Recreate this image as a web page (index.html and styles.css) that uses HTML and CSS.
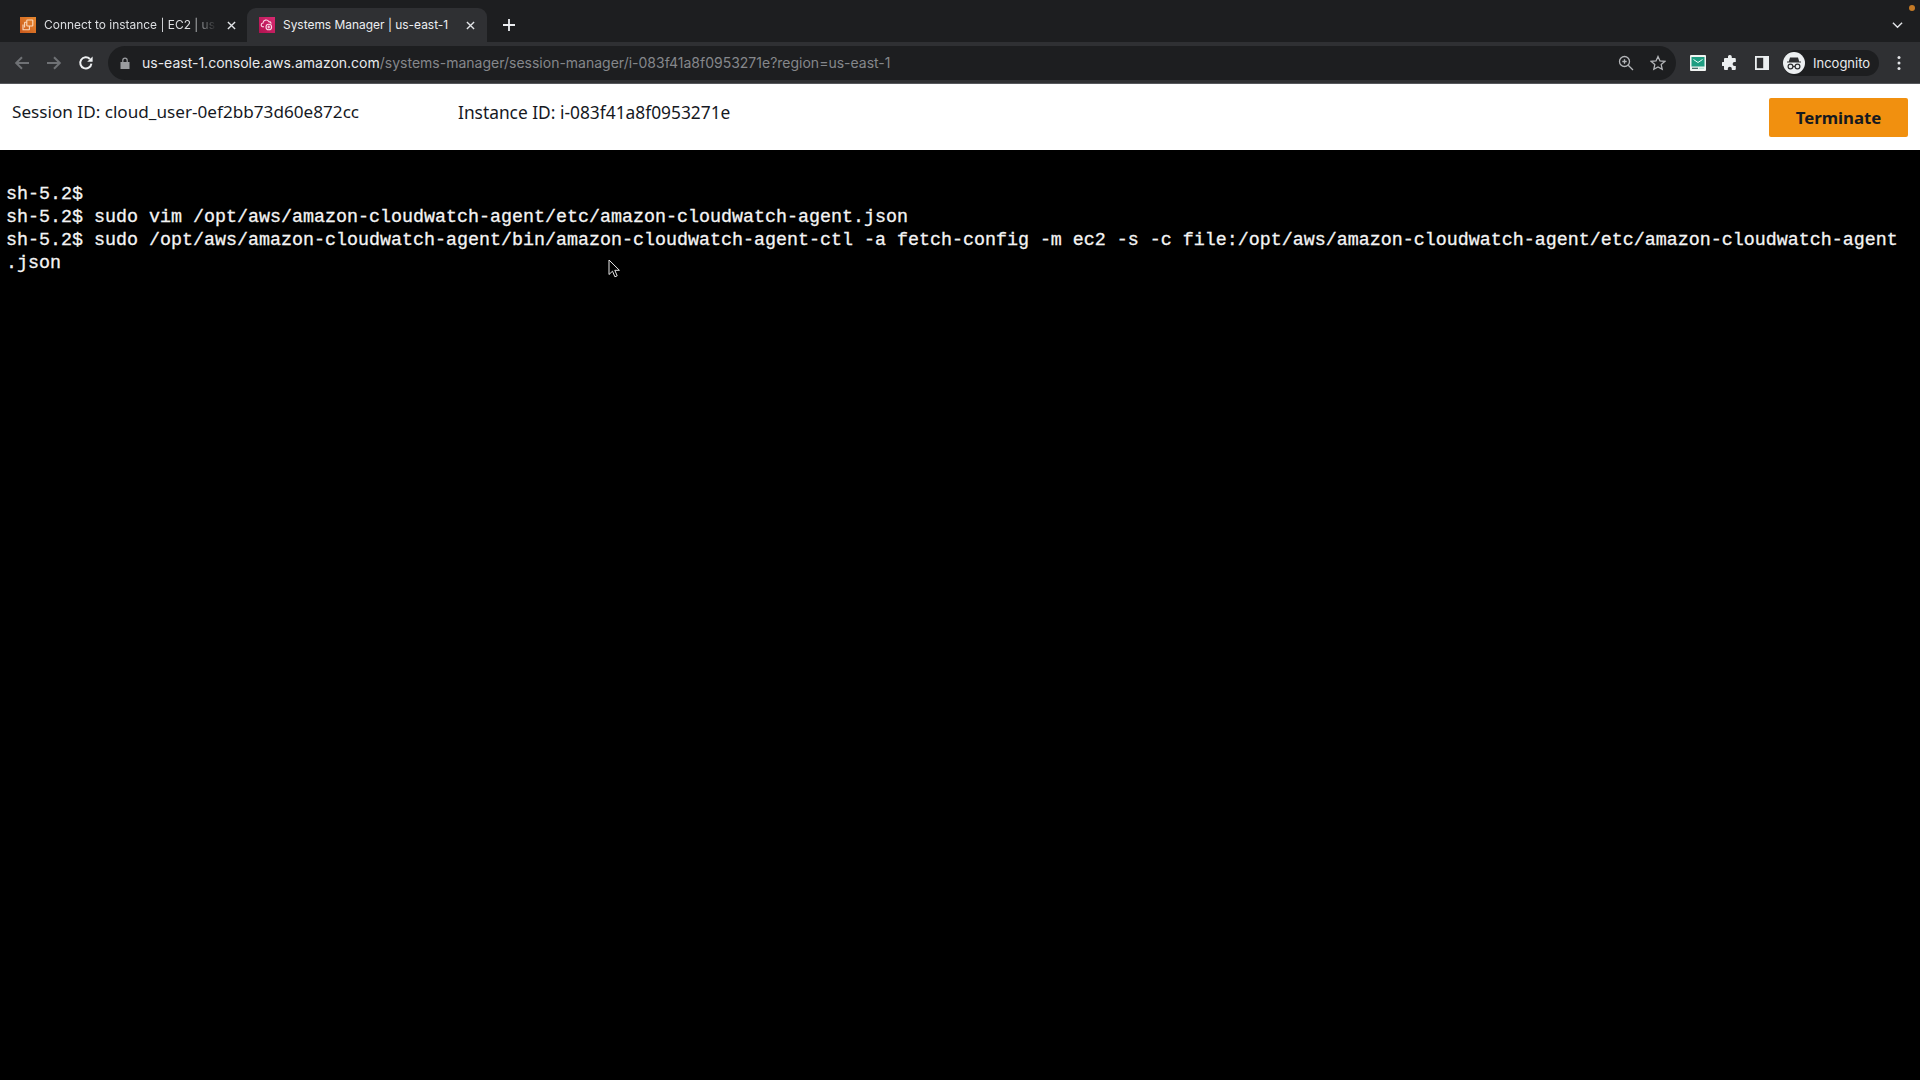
FILE: index.html
```html
<!DOCTYPE html>
<html lang="en">
<head>
<meta charset="utf-8">
<title>Systems Manager | us-east-1</title>
<link rel="stylesheet" href="styles.css">
</head>
<body>
<div class="tabstrip">
  <div class="tab">
    <svg class="favicon" viewBox="0 0 16 16"><defs><linearGradient id="ec2" x1="0" y1="1" x2="1" y2="0"><stop offset="0" stop-color="#c9581c"/><stop offset="1" stop-color="#e8892f"/></linearGradient></defs><rect width="16" height="16" fill="url(#ec2)"/><g fill="none" stroke="#fbd9bd" stroke-width="1.1"><rect x="6.8" y="3" width="6" height="6" rx=".6"/><path d="M6.8 5.2H5.2a.6.6 0 0 0-.6.6v4.6M3 7.6v5.2h5.8a.6.6 0 0 0 .6-.6V9"/></g></svg>
    <span class="tab-title fade">Connect to instance | EC2 | us</span>
    <svg class="tab-close" viewBox="0 0 10 10"><path d="M1 1l8 8M9 1l-8 8"/></svg>
  </div>
  <div class="tab active">
    <svg class="favicon" viewBox="0 0 16 16"><defs><linearGradient id="ssm" x1="0" y1="1" x2="1" y2="0"><stop offset="0" stop-color="#b0124f"/><stop offset="1" stop-color="#d92a72"/></linearGradient></defs><rect width="16" height="16" fill="url(#ssm)"/><g fill="none" stroke="#fcd9e7" stroke-width="1.1"><path d="M5 9.8H4.2a1.9 1.9 0 0 1-.2-3.8A3.1 3.1 0 0 1 9.8 4.6a2.4 2.4 0 0 1 2.4 2"/><circle cx="9.8" cy="10" r="2.8"/><path d="M9.8 8.6v2.8M8.4 10h2.8"/></g></svg>
    <span class="tab-title">Systems Manager | us-east-1</span>
    <svg class="tab-close" viewBox="0 0 10 10"><path d="M1 1l8 8M9 1l-8 8"/></svg>
  </div>
  <svg class="new-tab" viewBox="0 0 12 12"><path d="M6 0v12M0 6h12"/></svg>
  <svg class="tab-menu" viewBox="0 0 12 8"><path d="M1 1.5l5 5 5-5"/></svg>
  <span class="notice-dot"></span>
</div>

<div class="toolbar">
  <svg class="nav dim" viewBox="0 0 16 16"><path d="M15 8H2.5M8 2.2L2.2 8 8 13.8"/></svg>
  <svg class="nav dim" viewBox="0 0 16 16"><path d="M1 8h12.5M8 2.2L13.8 8 8 13.8"/></svg>
  <svg class="nav" viewBox="0 0 16 16"><path d="M13.4 8.6a5.6 5.6 0 1 1-1.5-4.6"/><path class="solid" d="M14.6 1.4v5.4H9.2z"/></svg>
  <div class="omnibox">
    <svg class="lock" viewBox="0 0 10 12"><path d="M2.2 5V3.4a2.8 2.8 0 0 1 5.6 0V5H9.5v7h-9V5zM3.4 5h3.2V3.4a1.6 1.6 0 0 0-3.2 0z"/></svg>
    <span class="url"><span class="host">us-east-1.console.aws.amazon.com</span>/systems-manager/session-manager/i-083f41a8f0953271e?region=us-east-1</span>
    <svg class="omni-icon zoom-icon" viewBox="0 0 16 16"><circle cx="6.5" cy="6.5" r="5"/><path d="M10.2 10.2l4.8 4.8M4.3 6.5h4.4M6.5 4.3v4.4"/></svg>
    <svg class="omni-icon star" viewBox="0 0 16 16"><path d="M8 1.5l2 4.4 4.8.5-3.6 3.2 1 4.7L8 11.9l-4.2 2.4 1-4.7L1.2 6.4 6 5.9z"/></svg>
  </div>
  <div class="ext-icons">
    <svg class="ext" viewBox="0 0 16 16"><rect width="16" height="16" rx="1" fill="#f2f4f3"/><rect x="1.5" y="2" width="13" height="9.5" fill="#1f9e82"/><path d="M3.5 4.5L8 7.5l4.5-3" fill="none" stroke="#e8fff8" stroke-width="1"/><rect x="2" y="12.7" width="6" height="1.3" fill="#47706a"/><rect x="9" y="12.7" width="5" height="1.3" fill="#b8e4d8"/></svg>
    <svg class="ext" viewBox="0 0 16 16"><path fill="#eceff1" d="M6 1.2a2 2 0 0 1 3.8.6V3h3a1 1 0 0 1 1 1v3h-1.2a2 2 0 0 0 0 4h1.2v3a1 1 0 0 1-1 1h-3v-1.2a2 2 0 0 0-4 0V15H3a1 1 0 0 1-1-1v-3H1a2 2 0 0 1 0-4h1V4a1 1 0 0 1 1-1h3z"/></svg>
    <svg class="ext" viewBox="0 0 16 16"><rect x="1" y="1" width="14" height="14" fill="#eceff1"/><rect x="2.8" y="2.8" width="6.4" height="10.4" fill="#2d2e31"/></svg>
  </div>
  <div class="profile">
    <span class="avatar"><svg viewBox="0 0 22 22"><path fill="#2d2e31" d="M7 5.5h8l1.2 4H18v1H4v-1h1.8z"/><g fill="none" stroke="#2d2e31" stroke-width="1.2"><circle cx="7.5" cy="14.5" r="2.4"/><circle cx="14.5" cy="14.5" r="2.4"/><path d="M9.9 14.5h2.2"/></g></svg></span>
    <span class="profile-name">Incognito</span>
  </div>
  <svg class="kebab" viewBox="0 0 4 16"><circle cx="2" cy="2.5" r="1.5"/><circle cx="2" cy="8" r="1.5"/><circle cx="2" cy="13.5" r="1.5"/></svg>
</div>

<header class="session-bar">
  <span class="session-id">Session ID: cloud_user-0ef2bb73d60e872cc</span>
  <span class="instance-id">Instance ID: i-083f41a8f0953271e</span>
  <button class="terminate">Terminate</button>
</header>

<main class="terminal">
<pre class="term-text">sh-5.2$ 
sh-5.2$ sudo vim /opt/aws/amazon-cloudwatch-agent/etc/amazon-cloudwatch-agent.json
sh-5.2$ sudo /opt/aws/amazon-cloudwatch-agent/bin/amazon-cloudwatch-agent-ctl -a fetch-config -m ec2 -s -c file:/opt/aws/amazon-cloudwatch-agent/etc/amazon-cloudwatch-agent
.json</pre>
  <svg class="pointer" viewBox="0 0 12 19"><path d="M1 1v14.5l3.5-3.3 2.4 5.6 2.3-1-2.4-5.5h4.6z"/></svg>
</main>
</body>
</html>
```
FILE: styles.css
```css
* { box-sizing: border-box; }
html, body { margin: 0; height: 100%; overflow: hidden; }
body { width: 1920px; height: 1080px; display: flex; flex-direction: column; background: #000; font-family: "Inter", "Liberation Sans", sans-serif; }

.tabstrip { position: relative; flex: 0 0 42px; display: flex; align-items: flex-end; padding-left: 8px; background: #1d1e20; }
.tab { width: 239px; height: 34px; padding: 0 11px 0 12px; display: flex; align-items: center; color: #dcdee1; border-radius: 9px 9px 0 0; }
.tab.active { width: 240px; padding: 0 12px; background: #2f3033; color: #eceef1; }
.favicon { width: 16px; height: 16px; flex: none; }
.tab-title { margin: -1px 0 0 8px; font-size: 11.95px; white-space: nowrap; overflow: hidden; flex: 1; }
.fade { -webkit-mask-image: linear-gradient(90deg, #000 84%, transparent 100%); mask-image: linear-gradient(90deg, #000 84%, transparent 100%); }
.tab-close { width: 9px; height: 9px; flex: none; margin-left: 10px; }
.tab-close path { fill: none; stroke: #e3e5e8; stroke-width: 1.5; }
.new-tab { width: 12px; height: 12px; margin: 0 0 11px 16px; }
.new-tab path { fill: none; stroke: #eceef1; stroke-width: 1.8; }
.tab-menu { width: 11px; height: 8px; margin: 0 17px 13px auto; }
.tab-menu path { fill: none; stroke: #e3e5e8; stroke-width: 1.5; }
.notice-dot { position: absolute; top: 5px; right: 5px; width: 6px; height: 6px; border-radius: 50%; background: #c47a26; }

.toolbar { flex: 0 0 42px; display: flex; align-items: center; padding-left: 14px; background: #2f3033; border-bottom: 1px solid #55575b; }
.nav { width: 16px; height: 16px; margin-right: 16px; flex: none; }
.nav path { fill: none; stroke: #eef0f2; stroke-width: 2; }
.nav path.solid { fill: #eef0f2; stroke: none; }
.nav.dim path { stroke: #6f7175; }
.omnibox { width: 1568px; height: 34px; margin-left: -2px; display: flex; align-items: center; padding-left: 12px; background: #1d1e20; border-radius: 17px; }
.lock { width: 10px; height: 12px; fill: #9a9c9f; flex: none; }
.url { margin-left: 12px; font-size: 14px; color: #85878b; white-space: nowrap; flex: 1; }
.host { color: #e8eaed; }
.omni-icon { width: 16px; height: 16px; flex: none; fill: none; stroke: #b4b6b9; stroke-width: 1.3; }
.zoom-icon { margin-right: 16px; }
.star { margin-right: 10px; }
.ext-icons { display: flex; align-items: center; gap: 16px; margin-left: 14px; }
.ext { width: 16px; height: 16px; flex: none; }
.profile { display: flex; align-items: center; height: 26px; margin-left: 13px; padding-right: 9px; background: #1d1e20; border-radius: 13px; }
.avatar { width: 22px; height: 22px; border-radius: 50%; background: #eceff1; display: block; }
.avatar svg { display: block; width: 22px; height: 22px; }
.profile-name { margin-left: 8px; font-size: 13px; color: #e8eaed; }
.kebab { width: 4px; height: 16px; margin-left: 18px; fill: #e3e5e8; flex: none; }

.session-bar { flex: 0 0 66px; display: flex; align-items: flex-start; background: #fff; color: #16191f; font-family: "Noto Sans", sans-serif; padding: 15px 12px 0; }
.session-id { width: 446px; font-size: 17.15px; line-height: 26px; }
.instance-id { font-size: 17.35px; line-height: 26px; }
.terminate { margin-left: auto; margin-top: -1px; width: 139px; height: 39px; padding: 0 0 1px; background: #f1900f; border: 0; border-radius: 2px; color: #16191f; font: 700 16.8px "Noto Sans", sans-serif; }

.terminal { position: relative; flex: 1; background: #000; padding: 33px 6px 0; }
.term-text { margin: 0; color: #f4f4f4; font: 400 18.34px/23px "Liberation Mono", monospace; -webkit-text-stroke: 0.3px #f4f4f4; }
.pointer { position: absolute; left: 608px; top: 109px; width: 12px; height: 19px; fill: #000; stroke: #e8e8e8; stroke-width: 1; }
```
